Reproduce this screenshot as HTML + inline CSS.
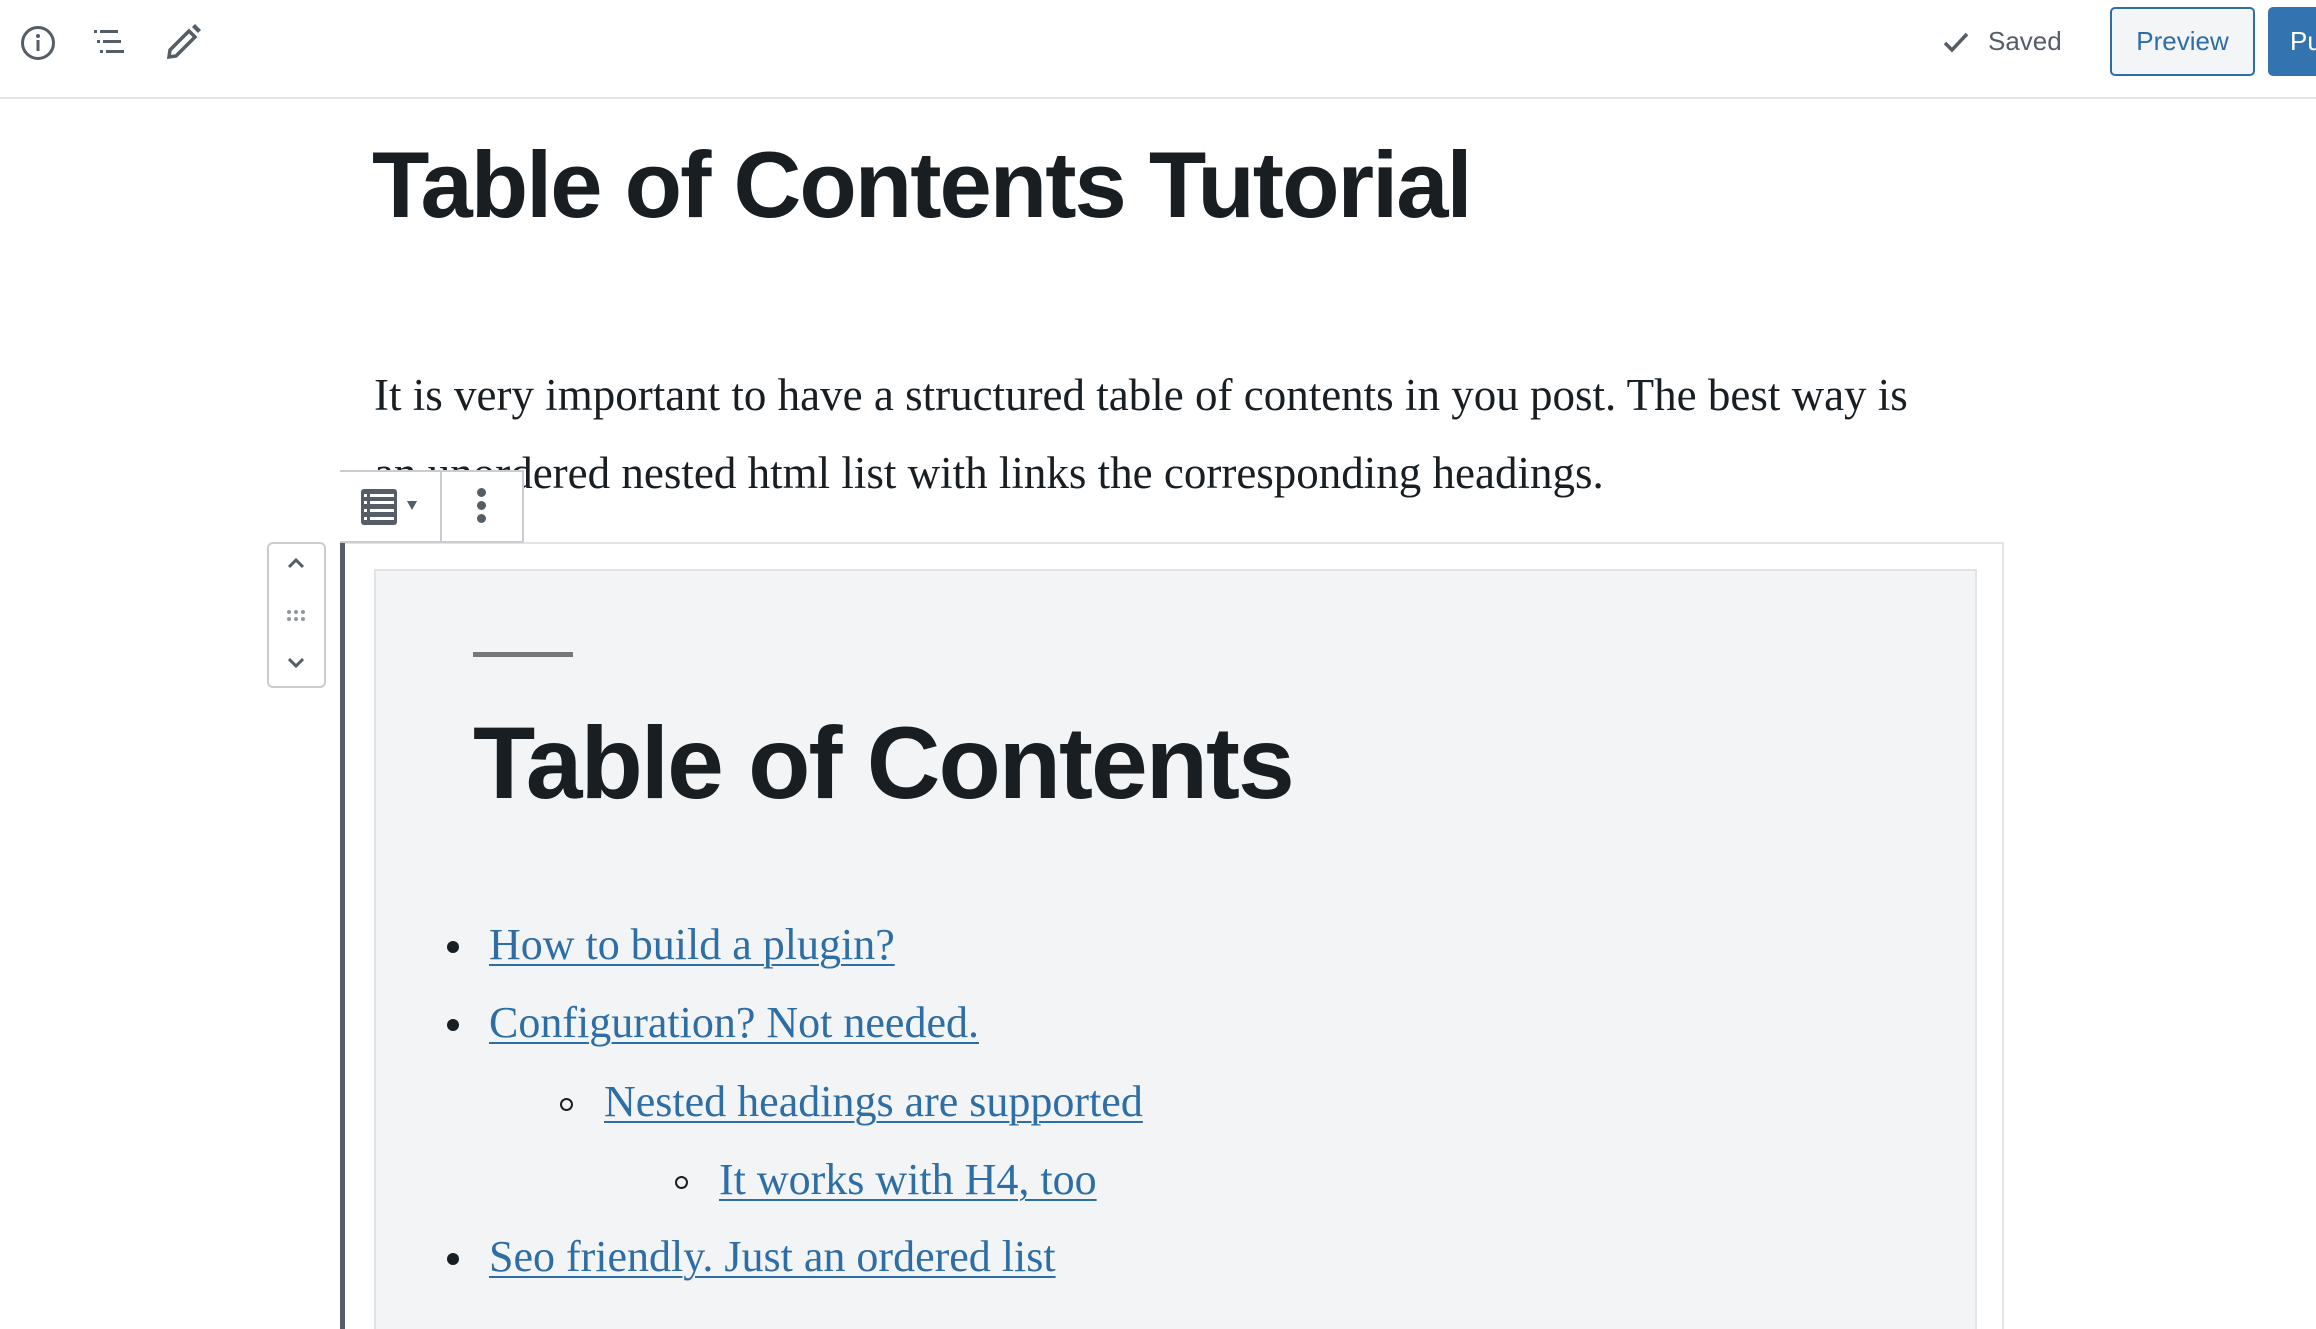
<!DOCTYPE html>
<html style="overflow:hidden;width:2316px;height:1329px"><head><meta charset="utf-8"><style>
*{margin:0;padding:0;box-sizing:border-box}
body{width:2316px;height:1329px;overflow:hidden;background:#fff;position:relative;font-family:"Liberation Sans",sans-serif}
.abs{position:absolute;white-space:nowrap}
.hdr{position:absolute;left:0;top:0;width:2316px;height:99px;border-bottom:2px solid #e2e4e7;background:#fff}
.serif{font-family:"Liberation Serif",serif;color:#191e23}
a{color:#2d6ea6;text-decoration:underline;text-decoration-thickness:2px;text-underline-offset:5px}
.dot{position:absolute;border-radius:50%}
</style></head><body>
<div class="hdr"></div>
<svg class="abs" style="left:18px;top:23px" width="40" height="40" viewBox="0 0 40 40"><circle cx="20" cy="20" r="15.5" fill="none" stroke="#555d66" stroke-width="3"/><circle cx="20" cy="13" r="2" fill="#555d66"/><rect x="18.5" y="17" width="3" height="11" fill="#555d66"/></svg>
<svg class="abs" style="left:94px;top:28px" width="36" height="36" viewBox="0 0 36 36"><g fill="#555d66"><rect x="0" y="2" width="3" height="3"/><rect x="6" y="2" width="18" height="3"/><rect x="3" y="12" width="3" height="3"/><rect x="9" y="12" width="18" height="3"/><rect x="6" y="22" width="3" height="3"/><rect x="12" y="22" width="18" height="3"/></g></svg>
<svg class="abs" style="left:164px;top:24px" width="50" height="36" viewBox="0 0 50 36"><g fill="none" stroke="#555d66" stroke-width="3.5"><path d="M5 33 L6 26 L25 7 L31 13 L12 32 Z"/></g><path d="M28 3 L31 0 L37 6 L34 9 Z" fill="#555d66"/></svg>
<svg class="abs" style="left:1942px;top:30px" width="30" height="26" viewBox="0 0 30 26"><path d="M3 13 L10 20 L25 4" fill="none" stroke="#555d66" stroke-width="3.5"/></svg>
<div class="abs" style="left:1988px;top:26px;font-size:26px;color:#555d66">Saved</div>
<div class="abs" style="left:2110px;top:7px;width:145px;height:69px;border:2px solid #2e6ea8;border-radius:5px;background:#f3f5f6;color:#2e6ea8;font-size:26px;text-align:center;line-height:65px">Preview</div>
<div class="abs" style="left:2268px;top:7px;width:60px;height:69px;border-radius:5px;background:#3373b0;color:#fff;font-size:26px;line-height:69px;padding-left:22px">Pu</div>
<div class="abs" style="left:372px;top:138px;font-size:94px;font-weight:bold;letter-spacing:-2px;color:#191e23;line-height:1">Table of Contents Tutorial</div>
<div class="abs serif" style="left:374px;top:356px;font-size:45px;line-height:78px">It is very important to have a structured table of contents in you post. The best way is<br>an unordered nested html list with links the corresponding headings.</div>
<div class="abs" style="left:340px;top:542px;width:1664px;height:800px;border:2px solid #e2e4e7;background:#fff"></div>
<div class="abs" style="left:340px;top:470px;width:5px;height:860px;background:#555d66"></div>
<div class="abs" style="left:340px;top:470px;width:184px;height:73px;border:2px solid #c9ccd0;border-left:none;background:#fff"></div>
<div class="abs" style="left:440px;top:470px;width:2px;height:73px;background:#c9ccd0"></div>
<svg class="abs" style="left:360px;top:488px" width="62" height="40" viewBox="0 0 62 40"><rect x="1" y="1" width="36" height="36" rx="3" fill="#555d66"/><g fill="#fff"><rect x="4" y="6" width="3" height="3"/><rect x="10" y="6" width="24" height="3"/><rect x="4" y="13" width="3" height="3"/><rect x="10" y="13" width="24" height="3"/><rect x="4" y="21" width="3" height="3"/><rect x="10" y="21" width="24" height="3"/><rect x="4" y="29" width="3" height="3"/><rect x="10" y="29" width="24" height="3"/></g><path d="M47 13 L57 13 L52 22 Z" fill="#555d66"/></svg>
<div class="dot" style="left:477px;top:488px;width:9px;height:9px;background:#555d66"></div>
<div class="dot" style="left:477px;top:501px;width:9px;height:9px;background:#555d66"></div>
<div class="dot" style="left:477px;top:514px;width:9px;height:9px;background:#555d66"></div>
<div class="abs" style="left:267px;top:542px;width:59px;height:146px;border:2px solid #c9ccd0;border-radius:6px;background:#fff"></div>
<svg class="abs" style="left:267px;top:542px" width="59" height="146" viewBox="0 0 59 146"><g fill="none" stroke="#555d66" stroke-width="3"><path d="M22 25 L29 18 L36 25"/><path d="M22 117 L29 124 L36 117"/></g><g fill="#8f98a1"><circle cx="22" cy="70" r="2"/><circle cx="29" cy="70" r="2"/><circle cx="36" cy="70" r="2"/><circle cx="22" cy="77" r="2"/><circle cx="29" cy="77" r="2"/><circle cx="36" cy="77" r="2"/></g></svg>
<div class="abs" style="left:374px;top:569px;width:1603px;height:800px;border:2px solid #e2e4e7;background:#f3f4f5"></div>
<div class="abs" style="left:473px;top:652px;width:100px;height:5px;background:#777"></div>
<div class="abs" style="left:473px;top:712px;font-size:102px;font-weight:bold;letter-spacing:-2px;color:#191e23;line-height:1">Table of Contents</div>
<div class="dot" style="left:447px;top:941px;width:12px;height:12px;background:#191e23"></div>
<div class="abs serif" style="left:489px;top:921px;font-size:44px;line-height:1.1"><a>How to build a plugin?</a></div>
<div class="dot" style="left:447px;top:1019px;width:12px;height:12px;background:#191e23"></div>
<div class="abs serif" style="left:489px;top:999px;font-size:44px;line-height:1.1"><a>Configuration? Not needed.</a></div>
<div class="dot" style="left:560px;top:1098px;width:13px;height:13px;border:2.5px solid #191e23"></div>
<div class="abs serif" style="left:604px;top:1078px;font-size:44px;line-height:1.1"><a>Nested headings are supported</a></div>
<div class="dot" style="left:675px;top:1176px;width:13px;height:13px;border:2.5px solid #191e23"></div>
<div class="abs serif" style="left:719px;top:1156px;font-size:44px;line-height:1.1"><a>It works with H4, too</a></div>
<div class="dot" style="left:447px;top:1253px;width:12px;height:12px;background:#191e23"></div>
<div class="abs serif" style="left:489px;top:1233px;font-size:44px;line-height:1.1"><a>Seo friendly. Just an ordered list</a></div>
</body></html>
